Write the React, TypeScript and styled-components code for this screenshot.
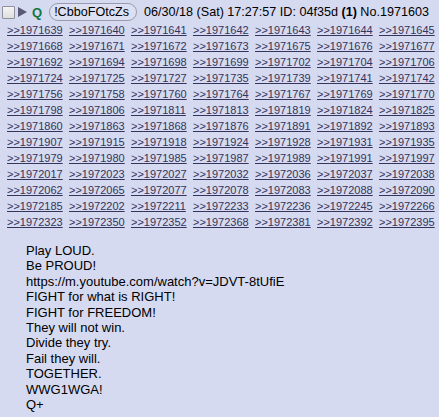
import React from "react";
import styled, { createGlobalStyle } from "styled-components";

const Global = createGlobalStyle`
  html, body { margin: 0; padding: 0; background: #d6daf0; }
  body { font-family: "Liberation Sans", Arial, sans-serif; color: #000; }
`;

const Post = styled.div`
  background: #d6daf0;
  min-height: 417px;
  padding: 2px 0 0 2px;
  box-sizing: border-box;
`;

const Header = styled.div`
  display: flex;
  align-items: center;
  height: 20px;
  font-size: 12.6px;
`;

const Check = styled.span`
  width: 11px;
  height: 11px;
  border: 1px solid #8f8f9d;
  background: linear-gradient(#f4f4f4, #dedede);
  border-radius: 1px;
  flex: none;
`;

const Arrow = styled.span`
  margin-left: 3px;
  width: 0;
  height: 0;
  border-top: 5px solid transparent;
  border-bottom: 5px solid transparent;
  border-left: 9px solid #5a5a78;
  flex: none;
`;

const QMark = styled.span`
  margin-left: 5px;
  color: #117743;
  font-weight: bold;
  font-size: 13px;
`;

const Trip = styled.span`
  margin-left: 7px;
  height: 16px;
  line-height: 16px;
  padding: 0 7px 0 4px;
  border: 1px solid #9a9aae;
  border-radius: 9px;
  background: #dde0f3;
`;

const Meta = styled.span`
  margin-left: 7px;
  white-space: nowrap;
`;

const Bold = styled.b``;

const Links = styled.div`
  display: grid;
  grid-template-columns: repeat(7, 62px);
  padding-left: 5px;
  font-size: 11px;
  line-height: 16px;
`;

const Backlink = styled.a`
  color: #34345c;
  text-decoration: underline;
  white-space: nowrap;
`;

const Body = styled.div`
  margin-top: 13px;
  padding-left: 24px;
  font-size: 13px;
  line-height: 15.4px;
`;

const Line = styled.div``;

const ids = [
  1971639, 1971640, 1971641, 1971642, 1971643, 1971644, 1971645,
  1971668, 1971671, 1971672, 1971673, 1971675, 1971676, 1971677,
  1971692, 1971694, 1971698, 1971699, 1971702, 1971704, 1971706,
  1971724, 1971725, 1971727, 1971735, 1971739, 1971741, 1971742,
  1971756, 1971758, 1971760, 1971764, 1971767, 1971769, 1971770,
  1971798, 1971806, 1971811, 1971813, 1971819, 1971824, 1971825,
  1971860, 1971863, 1971868, 1971876, 1971891, 1971892, 1971893,
  1971907, 1971915, 1971918, 1971924, 1971928, 1971931, 1971935,
  1971979, 1971980, 1971985, 1971987, 1971989, 1971991, 1971997,
  1972017, 1972023, 1972027, 1972032, 1972036, 1972037, 1972038,
  1972062, 1972065, 1972077, 1972078, 1972083, 1972088, 1972090,
  1972185, 1972202, 1972211, 1972233, 1972236, 1972245, 1972266,
  1972323, 1972350, 1972352, 1972368, 1972381, 1972392, 1972395,
];

const lines = [
  "Play LOUD.",
  "Be PROUD!",
  "https://m.youtube.com/watch?v=JDVT-8tUfiE",
  "FIGHT for what is RIGHT!",
  "FIGHT for FREEDOM!",
  "They will not win.",
  "Divide they try.",
  "Fail they will.",
  "TOGETHER.",
  "WWG1WGA!",
  "Q+",
];

export default function App() {
  return (
    <>
      <Global />
      <Post>
        <Header>
          <Check />
          <Arrow />
          <QMark>Q</QMark>
          <Trip>!CbboFOtcZs</Trip>
          <Meta>
            06/30/18 (Sat) 17:27:57 ID: 04f35d <Bold>(1)</Bold> No.1971603
          </Meta>
        </Header>
        <Links>
          {ids.map((id) => (
            <span key={id}>
              <Backlink href="#">&gt;&gt;{id}</Backlink>
            </span>
          ))}
        </Links>
        <Body>
          {lines.map((l) => (
            <Line key={l}>{l}</Line>
          ))}
        </Body>
      </Post>
    </>
  );
}
